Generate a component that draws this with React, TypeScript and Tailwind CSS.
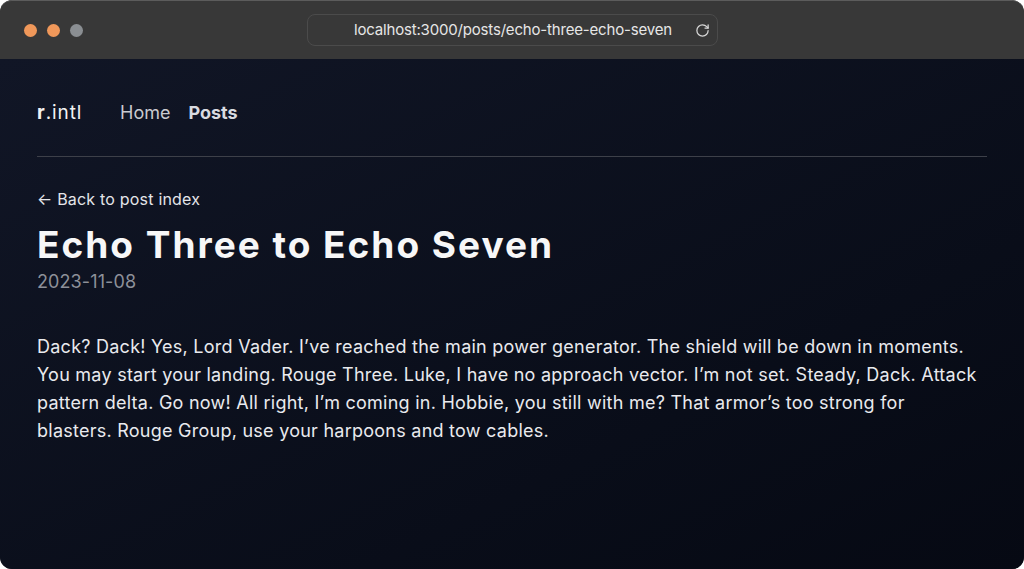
import { RotateCw } from "lucide-react";

const body =
  "Dack? Dack! Yes, Lord Vader. I’ve reached the main power generator. The shield will be down in moments. You may start your landing. Rouge Three. Luke, I have no approach vector. I’m not set. Steady, Dack. Attack pattern delta. Go now! All right, I’m coming in. Hobbie, you still with me? That armor’s too strong for blasters. Rouge Group, use your harpoons and tow cables.";

function TitleBar() {
  return (
    <div className="h-[59px] bg-[#383838] border-t border-[#5c5c5c] rounded-t-[12px] flex items-center relative">
      {/* traffic lights */}
      <div className="flex items-center gap-[10px] pl-[24px]">
        <span className="w-[13px] h-[13px] rounded-full bg-[#f0985a]" />
        <span className="w-[13px] h-[13px] rounded-full bg-[#f0985a]" />
        <span className="w-[13px] h-[13px] rounded-full bg-[#8a8e92]" />
      </div>
      <div className="absolute left-[307px] top-[13px] w-[411px] h-[32px] rounded-[8px] border border-[#4b4b4b] flex items-center">
        <span className="ml-[46px] text-[15px] text-[#e6e6e6] font-['Inter',sans-serif] tracking-[-0.18px]">
          localhost:3000/posts/echo-three-echo-seven
        </span>
        <RotateCw size={15} strokeWidth={2} className="absolute right-[7px] text-[#d8d8d8]" />
      </div>
    </div>
  );
}

export default function App() {
  return (
    <div className="w-[1024px] h-[569px] bg-white">
      <div className="w-full h-full rounded-[12px] overflow-hidden flex flex-col bg-[#383838]">
        <TitleBar />
        <main className="flex-1 bg-gradient-to-br from-[#111626] to-[#060913] px-[37px] font-['Inter',sans-serif]">
          <div className="w-[950px]">
            {/* Nav */}
            <nav className="h-[98px] pt-[40px] flex items-start border-b border-[#3d4049] leading-[28px]">
              <span className="text-[19px] text-[#f2f2f2] tracking-[0.9px] w-[83px]">
                <b className="font-bold">r</b>.intl
              </span>
              <span className="text-[18px] text-[#c9cbd0] mr-[18px]">Home</span>
              <span className="text-[18px] text-[#d9dbe0] font-bold">Posts</span>
            </nav>

            <div className="mt-[30px] text-[16px] leading-[24px] text-[#e4e5e9] tracking-[0.2px]">← Back to post index</div>
            <h1 className="mt-[12px] text-[37px] leading-[44px] font-bold text-[#f7f7f8] tracking-[2px]">
              Echo Three to Echo Seven
            </h1>
            <div className="mt-[3px] text-[18px] leading-[24px] text-[#8d9099] tracking-[0.1px]">2023-11-08</div>

            <p className="mt-[39px] max-w-[942px] text-[18px] leading-[28px] text-[#e9eaee] tracking-[0.25px]">{body}</p>
          </div>
        </main>
      </div>
    </div>
  );
}
